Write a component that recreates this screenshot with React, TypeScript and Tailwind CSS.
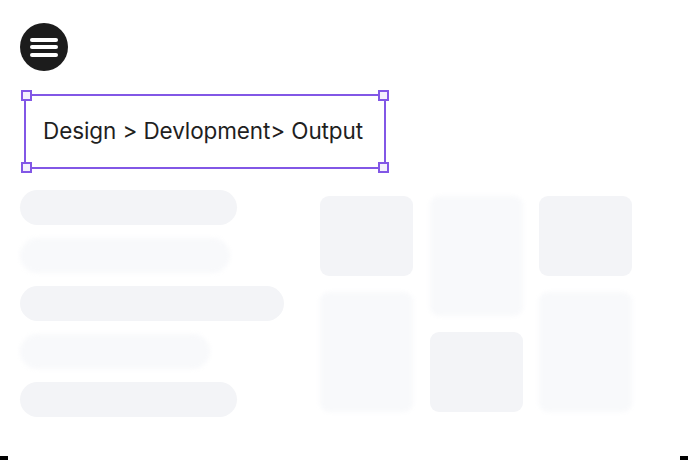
import React from "react";

function Handle({ pos }: { pos: string }) {
  return (
    <div
      className={`absolute w-[11px] h-[11px] border-2 border-[#8257e6] bg-[#f4f1fd] ${pos}`}
    />
  );
}

export default function App() {
  return (
    <div
      className="relative w-[688px] h-[460px] bg-white flex flex-col overflow-hidden"
      style={{ fontFamily: "Inter, 'Noto Sans', sans-serif" }}
    >
      {/* hamburger */}
      <div className="mt-[23px] ml-[20px] w-[48px] h-[48px] rounded-full bg-[#1c1c1c] flex flex-col items-center justify-center gap-[3.5px]">
        <div className="w-[28px] h-[4px] rounded-full bg-white" />
        <div className="w-[28px] h-[4px] rounded-full bg-white" />
        <div className="w-[28px] h-[4px] rounded-full bg-white" />
      </div>

      {/* selected text box */}
      <div className="relative mt-[23px] ml-[24px] w-[362px] h-[75px] border-2 border-[#8257e6] flex items-center pl-[17px]">
        <span className="text-[22.5px] leading-none text-[#1f1f1f] tracking-[-0.1px]">
          Design &gt; Devlopment&gt; Output
        </span>
        <Handle pos="-left-[5px] -top-[6px]" />
        <Handle pos="-right-[5px] -top-[6px]" />
        <Handle pos="-left-[5px] -bottom-[6px]" />
        <Handle pos="-right-[5px] -bottom-[6px]" />
      </div>

      {/* content */}
      <div className="flex mt-[21px]">
        <div className="ml-[20px] w-[264px] flex flex-col gap-[13px]">
          <div className="w-[217px] h-[35px] rounded-full bg-[#f3f4f7]" />
          <div className="w-[210px] h-[35px] rounded-full bg-[#f8f9fb] blur-[2px]" />
          <div className="w-[264px] h-[35px] rounded-full bg-[#f3f4f7]" />
          <div className="w-[190px] h-[35px] rounded-full bg-[#f8f9fb] blur-[2px]" />
          <div className="w-[217px] h-[35px] rounded-full bg-[#f3f4f7]" />
        </div>
        <div className="ml-[36px] mt-[6px] flex gap-[16.5px]">
          <div className="flex flex-col gap-[16px] w-[93px]">
            <div className="h-[80px] rounded-[9px] bg-[#f3f4f7]" />
            <div className="h-[120px] rounded-[9px] bg-[#f8f9fb] blur-[2px]" />
          </div>
          <div className="flex flex-col gap-[16px] w-[93px]">
            <div className="h-[120px] rounded-[9px] bg-[#f8f9fb] blur-[2px]" />
            <div className="h-[80px] rounded-[9px] bg-[#f3f4f7]" />
          </div>
          <div className="flex flex-col gap-[16px] w-[93px]">
            <div className="h-[80px] rounded-[9px] bg-[#f3f4f7]" />
            <div className="h-[120px] rounded-[9px] bg-[#f8f9fb] blur-[2px]" />
          </div>
        </div>
      </div>

      {/* bottom edge marks */}
      <div className="mt-auto flex justify-between h-[4px]">
        <div className="w-[8px] h-[4px] bg-black" />
        <div className="w-[8px] h-[4px] bg-black" />
      </div>
    </div>
  );
}
